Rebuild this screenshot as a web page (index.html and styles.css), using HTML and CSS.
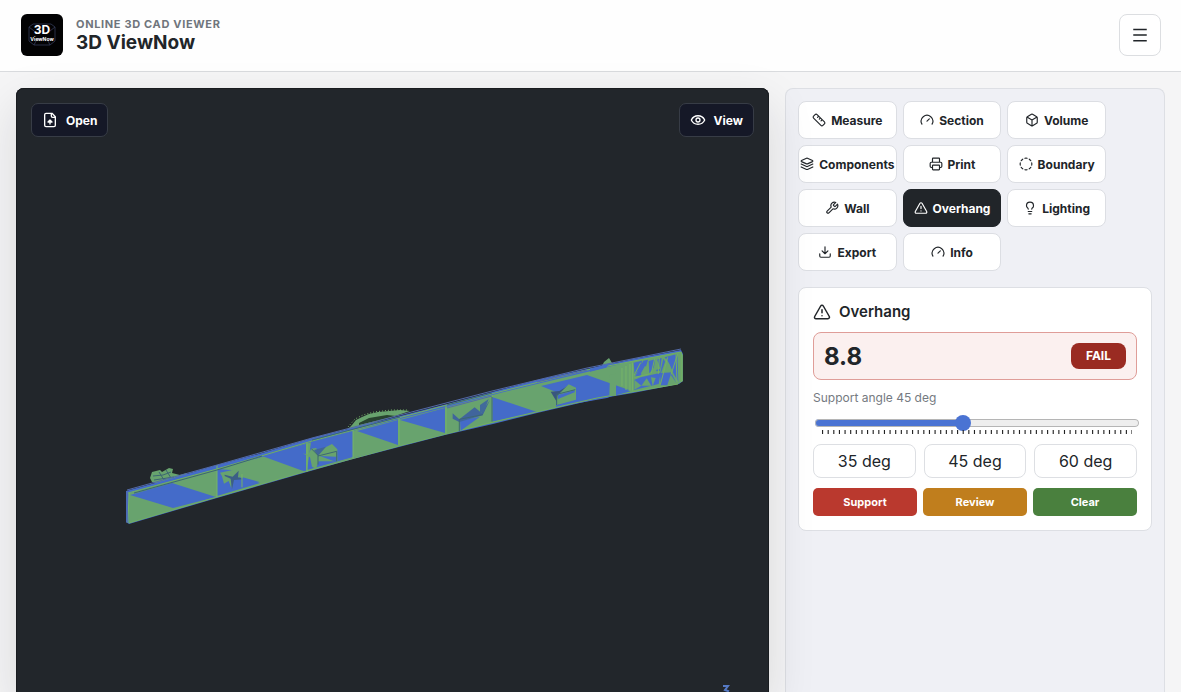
FILE: index.html
```
<!DOCTYPE html>
<html lang="en">
<head>
<meta charset="utf-8">
<meta name="viewport" content="width=device-width, initial-scale=1">
<title>3D ViewNow</title>
<link rel="stylesheet" href="styles.css">
</head>
<body>
<svg class="sprite" aria-hidden="true">
  <symbol id="gauge" viewBox="0 0 24 24"><path d="m12 14 4-4M3.34 19a10 10 0 1 1 17.32 0"/></symbol>
  <symbol id="alert" viewBox="0 0 24 24"><path d="m21.73 18-8-14a2 2 0 0 0-3.48 0l-8 14A2 2 0 0 0 4 21h16a2 2 0 0 0 1.73-3M12 9v4M12 17h.01"/></symbol>
</svg>
<header class="topbar">
  <div class="brand">
    <svg class="logo" viewBox="0 0 42 42" aria-hidden="true">
      <rect width="42" height="42" rx="6" fill="#020203"/>
      <path d="m12 10-4 3v14l5 4h16l5-4V13l-4-3M8 13l5 4m21-4-5 4M13 31l2-4m14 4-2-4M12 10h18" fill="none" stroke="#343b59" stroke-width=".8"/>
      <text x="21" y="20" class="logo-big">3D</text>
      <text x="21" y="27" class="logo-small">ViewNow</text>
    </svg>
    <div class="brand-text">
      <p class="eyebrow">ONLINE 3D CAD VIEWER</p>
      <h1 class="title">3D ViewNow</h1>
    </div>
  </div>
  <button class="menu" type="button" aria-label="Menu"><svg class="icon" viewBox="0 0 24 24"><path d="M3 4.500h18M3 12h18M3 19.500h18"/></svg></button>
</header>
<main class="workspace">
  <section class="viewer" aria-label="Model view">
    <svg class="model" viewBox="16 88 753 604" aria-hidden="true">
      <path class="g" d="m150 478 2-6 8-2 2 2 7-4 4 1-1 4 8 2 7-2-1 5-12 5-14 1-8-2z"/>
      <path class="line dark" d="m153 476 10-1 8-3m-17 8 20-3m-15-5 5 8m2-10 5 8"/>
      <path class="g" d="m347 430 5-5 4-5 6-3 7-3 9-2 11-1 11-1 10 1-15 5-19 6-16 6z"/>
      <path d="m359 423 10-5 18-3 9 1-20 5-17 4z" fill="#28432f"/>
      <path class="line" stroke-dasharray="1 2" d="m348 427 7-8 8-4 11-3 17-2h17"/>
      <path class="g" d="m602 366 2-4 5-4 3 5 5 1-10 5z"/>
      <path class="b" d="M126 491 173 478 217 465 262 453 312 438 352 428 400 416 447 404 492 392 537 380 587 369 633 359 681 350 683 354 683 381 679 384 633 393 597 399 537 413 493 424 445 435 399 447 353 459 307 472 217 498 129 524 126 522z"/>
      <path class="g" d="M129 493 173 481 217 469 262 457 312 442 352 431 400 419 447 407 500 393 537 384 587 372 633 361 681 352 683 355 683 381 678 384 633 392 597 398 537 412 493 423 445 434 399 446 353 458 307 471 217 497 129 523z"/>
      <path class="b" d="m130 495 42-12 44 14-43 11zM217 469l14 1 8 7 21 6-43 13zM262 456l44-12v28zM311 442l42-11v26l-46 13zM357 431l41-11v25zM400 420l45-12v25zM492 397v25l45-10zM541 386l46-11 42 15-22 8-51 9v-15z"/>
      <path class="line bright" d="M129 523 217 497 307 471 399 446 493 422 597 398 678 384M128 493 217 469 312 441 447 405 587 370 681 352"/>
      <path class="line" d="M217 465v32M307 443v29M353 429v29M399 418v27M446 406v28M492 395v27M129 493l-1 30"/>
      <path class="line blue" d="M127 490 217 465 312 438 400 415 492 391 587 368 681 349M127 491v32M447 408l45-12M537 382l50-12"/>
      <path class="line dark" d="M134 493 217 470 262 456M312 440 400 417M447 405 492 393"/>
      <g transform="translate(110 400) scale(.3333)">
        <path class="g" d="m330 218 48-10 18 15-10 12-20-4-2 34-8-22-14 8-6-22z"/>
        <path d="m344 224 24 6 18-18-2 20 18 6-30 2-6 28-4-32-18-8z" fill="#3c5f86"/>
        <path class="b" d="m398 232 50 14-50 16z"/>
        <path class="line wide" d="M396 222v40"/>
      </g>
      <g transform="translate(280 370) scale(.3333)">
        <path class="g" d="m68 250 16 4 10-18 14-2 8 8 40-20 16 16v36h-56l-8 22-12-6-6-28z"/>
        <path class="b" d="m120 258 48 2v16z"/>
        <path d="m102 240 36-10-24 28z" fill="#41669a"/>
        <path class="line wide dark" d="m94 236 20 20v28m0-26 56-14v30"/>
        <path class="b" d="m540 152 60-12-58 42z"/>
        <path d="m518 130 20 18 46-36 20 16 26-38-22 46-70 20-20-10z" fill="#40659c"/>
        <path class="line wide dark" d="M538 148v36m0-36 70-14"/>
      </g>
      <g transform="translate(480 335) scale(.3333)">
        <path d="m212 170 26-2 30-18-30 28-2 32z" fill="#39567e"/>
        <path class="g" d="m232 182 34-34 22 10v36l-58 16z"/>
        <path class="b" d="m234 180 50-14v6l-50 20z"/>
        <path class="line wide dark" d="m230 178 56-14M230 178v32"/>
        <path d="m0 210 26-18-14 38-12 4z" fill="#416a9b"/>
        <path class="line dark wide" d="M36 186v74"/>
      </g>
      <g transform="translate(590 340) scale(.3333)">
        <path class="b" d="m0 86 58-15-10 12-48 12z"/>
        <path class="g" d="m60 105 18-4v66H58z"/>
        <path class="b" d="m78 140 44 14-44 12z"/>
        <path class="line wide" d="M96 84v55M108 78v72M120 72v80M128 68v84"/>
        <path class="b" d="m131 68 25-6-2 16-20 28zM160 62l14-3-7 24-16 25-16 2zM132 120l20-8 60-14-6 34-74 18z"/>
        <path class="g" d="m133 119 21 18-21 12zM154 137l16-22 14 22zM183 112l14 2-9 24zM153 100l12-22 14 8v16l-22 4z"/>
        <path class="b" d="m176 63 20-5-5 26-13 16zM203 57l12-3-5 38-11 2zM210 102l10-46 14 24 26 50-18-26-10 32h-20zM224 52l38-10 3 84-17-30-10-25z"/>
        <path class="g" d="m229 55 20 42-36 2zM203 62l8 24-24 6z"/>
        <path class="line bright wide" d="m194 56-10 44m24-46-3 48m28-50-22 82m52-92-20 62m15-64 3 86m13-90v90M134 112l44-10m-26-34-20 38"/>
      </g>
    </svg>
    <div class="viewer-bar">
      <button class="overlay" type="button"><svg class="icon" viewBox="0 0 24 24"><path d="M15 2H6a2 2 0 0 0-2 2v16a2 2 0 0 0 2 2h12a2 2 0 0 0 2-2V7zM14 2v4a2 2 0 0 0 2 2h4M12 12v6M9 15l3-3 3 3z"/></svg>Open</button>
      <button class="overlay" type="button"><svg class="icon" viewBox="0 0 24 24"><path d="M2 12a11 11 0 0 1 20 0 11 11 0 0 1-20 0z"/><circle cx="12" cy="12" r="3"/></svg>View</button>
    </div>
    <svg class="axis" viewBox="0 0 8 12" aria-hidden="true"><path d="M1 1h5L3 5l3 1-3 5"/></svg>
  </section>
  <aside class="panel">
    <nav class="tools" aria-label="Tools">
      <button class="tool" type="button"><svg class="icon" viewBox="0 0 24 24"><path d="M2.700 8.700a2.400 2.400 0 0 1 0-3.400l2.600-2.600a2.400 2.400 0 0 1 3.400 0l12.600 12.600a2.400 2.400 0 0 1 0 3.400l-2.600 2.600a2.400 2.400 0 0 1-3.400 0zM14.500 8.500l-2 2M11.500 5.500l-2 2M17.500 11.500l-2 2"/></svg>Measure</button>
      <button class="tool" type="button"><svg class="icon"><use href="#gauge"/></svg>Section</button>
      <button class="tool" type="button"><svg class="icon" viewBox="0 0 24 24"><path d="M21 16V8a2 2 0 0 0-1-1.730l-7-4a2 2 0 0 0-2 0l-7 4A2 2 0 0 0 3 8v8a2 2 0 0 0 1 1.730l7 4a2 2 0 0 0 2 0l7-4A2 2 0 0 0 21 16zM3.300 7 12 12l8.700-5M12 12v10"/></svg>Volume</button>
      <button class="tool" type="button"><svg class="icon" viewBox="0 0 24 24"><path d="m12.800 2.200 8.600 3.900a1 1 0 0 1 0 1.800l-8.600 3.900a2 2 0 0 1-1.600 0L2.600 7.900a1 1 0 0 1 0-1.800l8.600-3.900a2 2 0 0 1 1.600 0zM2 12l9.200 4.300a2 2 0 0 0 1.600 0L22 12M2 17l9.200 4.300a2 2 0 0 0 1.600 0L22 17"/></svg>Components</button>
      <button class="tool" type="button"><svg class="icon" viewBox="0 0 24 24"><path d="M6 18H4a2 2 0 0 1-2-2v-5a2 2 0 0 1 2-2h16a2 2 0 0 1 2 2v5a2 2 0 0 1-2 2h-2M6 9V3a1 1 0 0 1 1-1h10a1 1 0 0 1 1 1v6"/><rect x="6" y="14" width="12" height="8" rx="1"/></svg>Print</button>
      <button class="tool" type="button"><svg class="icon" viewBox="0 0 24 24"><path d="M10.100 2.200a10 10 0 0 1 3.800 0M13.900 21.800a10 10 0 0 1-3.800 0M17.600 3.700a10 10 0 0 1 2.700 2.700M2.200 13.900a10 10 0 0 1 0-3.800M20.300 17.600a10 10 0 0 1-2.700 2.700M21.800 10.100a10 10 0 0 1 0 3.800M3.700 6.400a10 10 0 0 1 2.700-2.700M6.400 20.300a10 10 0 0 1-2.700-2.700"/></svg>Boundary</button>
      <button class="tool" type="button"><svg class="icon" viewBox="0 0 24 24"><path d="M14.700 6.300a1 1 0 0 0 0 1.400l1.600 1.600a1 1 0 0 0 1.400 0l3.800-3.800a6 6 0 0 1-7.900 7.900l-6.900 6.900a2.100 2.100 0 0 1-3-3l6.900-6.900a6 6 0 0 1 7.900-7.900z"/></svg>Wall</button>
      <button class="tool active" type="button" aria-pressed="true"><svg class="icon"><use href="#alert"/></svg>Overhang</button>
      <button class="tool" type="button"><svg class="icon" viewBox="0 0 24 24"><path d="M15 14c.2-1 .7-1.700 1.500-2.500 1-.9 1.500-2.200 1.500-3.500A6 6 0 0 0 6 8c0 1 .2 2.200 1.500 3.500.7.700 1.300 1.500 1.500 2.500M9 18h6M10 22h4"/></svg>Lighting</button>
      <button class="tool" type="button"><svg class="icon" viewBox="0 0 24 24"><path d="M21 15v4a2 2 0 0 1-2 2H5a2 2 0 0 1-2-2v-4M7 10l5 5 5-5M12 15V3"/></svg>Export</button>
      <button class="tool" type="button"><svg class="icon"><use href="#gauge"/></svg>Info</button>
    </nav>
    <section class="card">
      <h2 class="card-title"><svg class="icon"><use href="#alert"/></svg>Overhang</h2>
      <div class="result"><strong class="score">8.8</strong><span class="badge">FAIL</span></div>
      <div class="angle">
        <label class="angle-label" for="angle">Support angle 45 deg</label>
        <input class="range" id="angle" type="range" min="20" max="75" value="45">
        <svg class="ticks" aria-hidden="true"><line x1="0" y1="2" x2="100%" y2="2" pathLength="551"/></svg>
      </div>
      <div class="presets">
        <button class="preset" type="button">35 deg</button>
        <button class="preset" type="button">45 deg</button>
        <button class="preset" type="button">60 deg</button>
      </div>
      <div class="legend">
        <span class="key support">Support</span>
        <span class="key review">Review</span>
        <span class="key clear">Clear</span>
      </div>
    </section>
  </aside>
</main>
</body>
</html>
```
FILE: styles.css
```
* { box-sizing: border-box; }
body {
  display: flex;
  flex-direction: column;
  margin: 0;
  height: 100vh;
  overflow: hidden;
  background: #f5f5f6;
  color: #212529;
  font-family: Inter, "Liberation Sans", sans-serif;
  font-size: 16px;
}
h1, h2, p { margin: 0; }
button { font: inherit; color: inherit; padding: 0; cursor: pointer; }
.sprite { display: none; }
.icon {
  width: 14px;
  height: 14px;
  flex: none;
  fill: none;
  stroke: currentColor;
  stroke-width: 2;
  stroke-linecap: round;
  stroke-linejoin: round;
}
.topbar {
  display: flex;
  align-items: center;
  justify-content: space-between;
  flex: none;
  padding: 14px 20px 15px 21px;
  background: #fefefe;
  border-bottom: 1px solid #d9dbde;
}
.brand { display: flex; align-items: center; gap: 13px; }
.logo { width: 42px; height: 42px; }
.logo-big, .logo-small { fill: #fff; text-anchor: middle; font-weight: 700; }
.logo-big { font-size: 12px; }
.logo-small { font-size: 5px; }
.eyebrow { font-size: 11px; line-height: 16px; font-weight: 700; letter-spacing: 0.06em; color: #6f757c; }
.title { font-size: 19px; line-height: 22px; font-weight: 700; }
.menu {
  display: grid;
  place-items: center;
  width: 42px;
  height: 42px;
  background: #fff;
  border: 1px solid #dcdee1;
  border-radius: 8px;
}
.menu .icon { width: 18px; height: 18px; stroke-linecap: butt; }
.workspace {
  display: grid;
  flex: 1;
  grid-template-columns: minmax(0, 1fr) 380px;
  gap: 16px;
  min-height: 0;
  padding: 16px 16px 0;
}
.viewer {
  position: relative;
  overflow: clip;
  background: #22262b;
  border-radius: 8px 8px 0 0;
  box-shadow: inset 0 1px 0 #191c20, inset 1px 0 0 #191c20, inset -1px 0 0 #191c20, 0 18px 48px rgba(20, 24, 30, 0.13);
}
.model { position: absolute; top: 0; left: 0; width: 100%; }
.g { fill: #68a36e; }
.b { fill: #446bc9; }
.line { fill: none; stroke: #75b568; stroke-width: 1; }
.line.bright { stroke: #72b060; }
.line.blue { stroke: #536aa8; }
.line.dark { stroke: #3c6672; }
.line.wide { stroke-width: 3; }
.axis { position: absolute; top: 597px; right: 39px; width: 8px; height: 12px; fill: none; stroke: #5579c4; stroke-width: 2; }
.viewer-bar { position: relative; display: flex; justify-content: space-between; padding: 15px; }
.overlay {
  display: flex;
  align-items: center;
  gap: 8px;
  height: 34px;
  padding: 0 10px;
  background: #151827;
  color: #fff;
  border: 1px solid #373c46;
  border-radius: 7px;
  font-size: 12px;
  font-weight: 700;
}
.overlay .icon { width: 16px; height: 16px; }
.panel { padding: 12px; background: #eff0f5; border: 1px solid #dddfe4; border-bottom: 0; border-radius: 8px 8px 0 0; }
.tools { display: grid; grid-template-columns: repeat(3, minmax(0, 1fr)); gap: 6px; max-width: 308px; }
.tool {
  display: flex;
  align-items: center;
  justify-content: center;
  gap: 5px;
  height: 38px;
  background: #fff;
  border: 1px solid #dcdee3;
  border-radius: 8px;
  font-size: 12px;
  font-weight: 700;
}
.tool.active { background: #212529; border-color: #212529; color: #fff; }
.card {
  display: grid;
  gap: 10px;
  margin-top: 16px;
  padding: 14px;
  background: #fff;
  border: 1px solid #dddfe4;
  border-radius: 8px;
}
.card-title { display: flex; align-items: center; gap: 8px; font-size: 15px; line-height: 20px; font-weight: 600; }
.card-title .icon { width: 18px; height: 18px; }
.result {
  display: flex;
  align-items: center;
  justify-content: space-between;
  height: 48px;
  padding: 0 10px;
  background: #fbf0ef;
  border: 1px solid #df9d98;
  border-radius: 8px;
}
.score { font-size: 24px; font-weight: 700; }
.badge { padding: 0 15px; border-radius: 8px; background: #9a2b22; color: #fff; font-size: 12px; line-height: 26px; font-weight: 700; }
.angle { display: flex; flex-direction: column; height: 44px; }
.angle-label { font-size: 12px; line-height: 16px; color: #757a81; }
.range { appearance: none; width: 100%; height: 16px; margin: 9px 0 0 2px; background: none; }
.range::-webkit-slider-runnable-track {
  height: 8px;
  border-radius: 4px;
  background: linear-gradient(90deg, #4a73d3 46%, transparent 46%), #eee;
  box-shadow: inset 0 0 0 1px #b5b5b5;
}
.range::-webkit-slider-thumb { appearance: none; width: 16px; height: 16px; margin-top: -4px; border-radius: 50%; background: #4a73d3; }
.ticks { flex: none; align-self: center; width: calc(100% - 14px); height: 4px; margin-top: -1px; margin-left: 4px; }
.ticks line { stroke: #222; stroke-width: 4; stroke-dasharray: 2 8; }
.presets { display: grid; grid-template-columns: repeat(3, 1fr); gap: 8px; }
.preset { height: 34px; background: #fff; border: 1px solid #dddfe3; border-radius: 8px; font-size: 16px; }
.legend { display: grid; grid-template-columns: repeat(3, 1fr); gap: 6px; }
.key { border-radius: 5px; color: #fff; font-size: 11px; line-height: 28px; font-weight: 700; text-align: center; }
.support { background: #ba392e; }
.review { background: #c07e1d; }
.clear { background: #4a803e; }
```
